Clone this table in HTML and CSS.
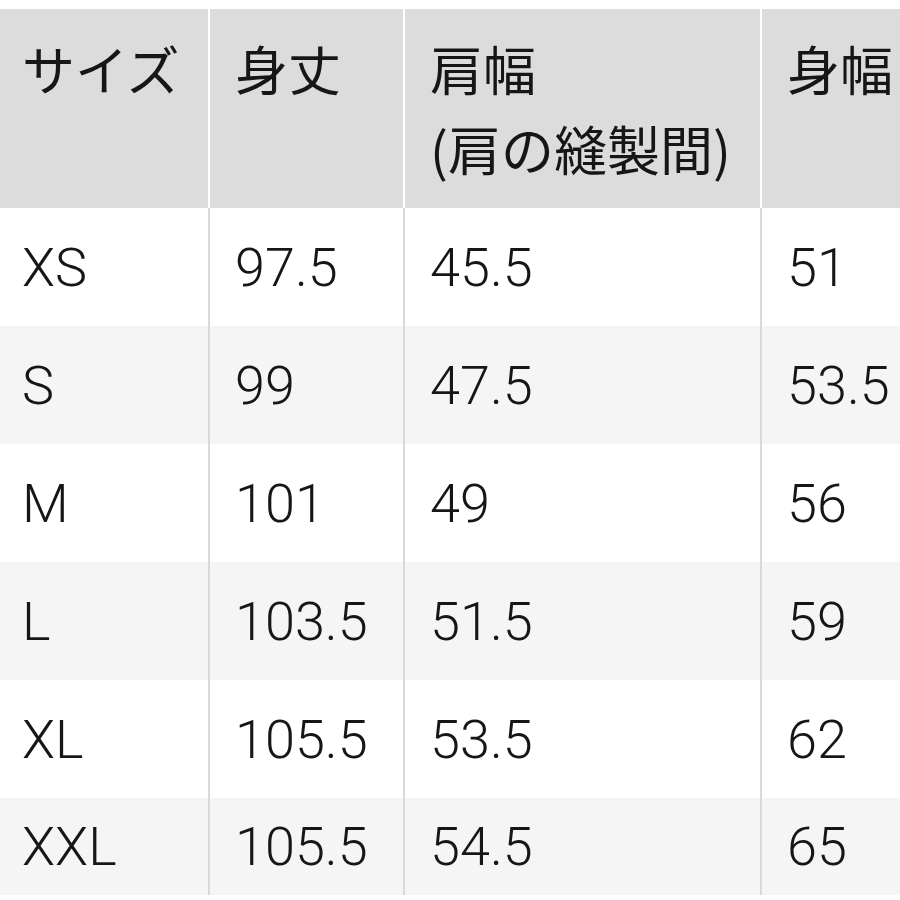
FILE: index.html
```html
<!DOCTYPE html>
<html lang="ja">
<head>
<meta charset="utf-8">
<link rel="stylesheet" href="styles.css">
</head>
<body>
<div class="sheet">
  <div class="row head">
    <div class="cell first">サイズ</div>
    <div class="cell">身丈</div>
    <div class="cell">肩幅<br>(肩の縫製間)</div>
    <div class="cell">身幅</div>
  </div>
  <div class="row">
    <div class="cell first">XS</div>
    <div class="cell">97.5</div>
    <div class="cell">45.5</div>
    <div class="cell">51</div>
  </div>
  <div class="row alt">
    <div class="cell first">S</div>
    <div class="cell">99</div>
    <div class="cell">47.5</div>
    <div class="cell">53.5</div>
  </div>
  <div class="row">
    <div class="cell first">M</div>
    <div class="cell">101</div>
    <div class="cell">49</div>
    <div class="cell">56</div>
  </div>
  <div class="row alt">
    <div class="cell first">L</div>
    <div class="cell">103.5</div>
    <div class="cell">51.5</div>
    <div class="cell">59</div>
  </div>
  <div class="row">
    <div class="cell first">XL</div>
    <div class="cell">105.5</div>
    <div class="cell">53.5</div>
    <div class="cell">62</div>
  </div>
  <div class="row alt last">
    <div class="cell first">XXL</div>
    <div class="cell">105.5</div>
    <div class="cell">54.5</div>
    <div class="cell">65</div>
  </div>
</div>
</body>
</html>
```

FILE: styles.css
```css
html, body {
  margin: 0;
  padding: 0;
  background: #ffffff;
}
body {
  width: 900px;
  height: 900px;
  overflow: hidden;
}
.sheet {
  padding-top: 9px;
  font-family: Roboto, "Noto Sans CJK JP", sans-serif;
  color: #161616;
}
.row {
  display: grid;
  grid-template-columns: 208px 193px 355px 1fr;
  column-gap: 2px;
  background: #d9d9d9;
  height: 118px;
}
.row .cell {
  background: #ffffff;
  font-size: 54px;
  font-weight: 300;
  padding-left: 25px;
  white-space: nowrap;
  display: flex;
  align-items: center;
}
.row .cell.first {
  padding-left: 22px;
}
.row.alt .cell {
  background: #f5f5f5;
}
.row.last {
  height: 97px;
}
.row.head {
  height: 199px;
  background: #ffffff;
}
.row.head .cell {
  background: #dcdcdc;
  font-family: "Noto Sans CJK JP", sans-serif;
  font-weight: 400;
  font-size: 53px;
  line-height: 80px;
  padding-top: 19px;
  display: block;
}
```
